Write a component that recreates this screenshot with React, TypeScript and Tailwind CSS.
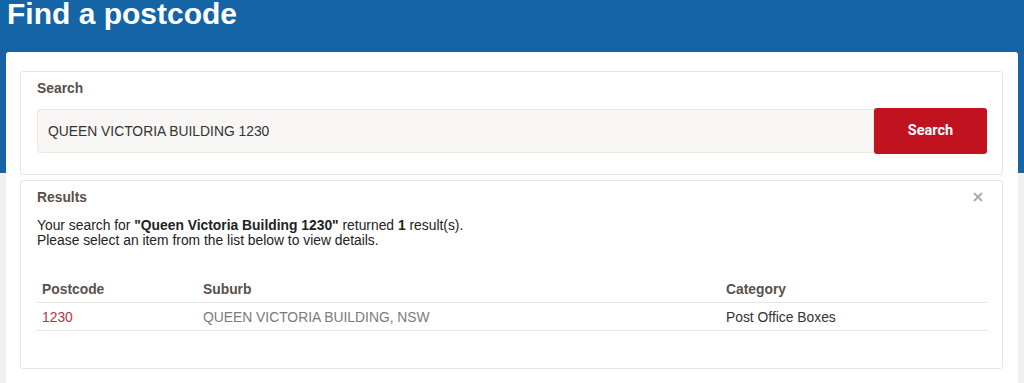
import React from "react";

export default function App() {
  return (
    <div className="flex min-h-[383px] w-full flex-col bg-[linear-gradient(to_bottom,#1464a6_173px,#f2f0ed_173px)] font-['Liberation_Sans',Arial,sans-serif]">
      <div className="h-[52px] px-[7px]">
        <h1 className="text-[30px] font-bold leading-[28px] text-white">Find a postcode</h1>
      </div>
      <div className="mx-[6px] rounded-t-[3px] bg-white pb-[20px] pl-[14px] pr-[15px] pt-[19px]">
        {/* Search panel */}
        <div className="rounded-[3px] border border-[#e6e6e6] pb-[20px] pl-[16px] pr-[15px] pt-[6px]">
          <div className="text-[13.85px] font-bold leading-[21px] text-[#594f49]">Search</div>
          <div className="mt-[9px] flex items-center">
            <div className="flex h-[44px] flex-1 items-center rounded-l-[3px] border border-[#ede6e1] bg-[#f8f6f4] px-[10px] text-[13.85px] text-[#333]">
              QUEEN VICTORIA BUILDING 1230
            </div>
            <button className="h-[46px] w-[113px] rounded-[3px] bg-[#c0121f] font-['Roboto',Arial,sans-serif] text-[14.5px] font-bold text-white">
              Search
            </button>
          </div>
        </div>
        {/* Results panel */}
        <div className="relative mt-[5px] rounded-[3px] border border-[#e6e6e6] pb-[37px] pl-[16px] pr-[15px] pt-[6px]">
          <div className="text-[13.85px] font-bold leading-[21px] text-[#594f49]">Results</div>
          <svg
            className="absolute right-[19px] top-[11px]"
            width="10"
            height="10"
            viewBox="0 0 10 10"
            fill="none"
            stroke="#aaaaaa"
            strokeWidth="1.8"
          >
            <path d="M1 1L9 9M9 1L1 9" />
          </svg>
          <p className="mt-[10px] text-[13.85px] leading-[15px] text-[#222]">
            Your search for <b>"Queen Victoria Building 1230"</b> returned <b>1</b> result(s).
            <br />
            Please select an item from the list below to view details.
          </p>
          <div className="mt-[27px] text-[13.85px]">
            <div className="grid grid-cols-[161px_523px_1fr] border-b border-[#e6e6e6] pb-[3px] pt-[4px] font-bold leading-[20px] text-[#5b504b]">
              <div className="pl-[5px]">Postcode</div>
              <div className="pl-[5px]">Suburb</div>
              <div className="pl-[5px]">Category</div>
            </div>
            <div className="grid grid-cols-[161px_523px_1fr] border-b border-[#e6e6e6] pb-[3px] pt-[4px] leading-[20px]">
              <div className="pl-[5px] text-[#b9323f]">1230</div>
              <div className="pl-[5px] text-[#7b7b7b]">QUEEN VICTORIA BUILDING, NSW</div>
              <div className="pl-[5px] text-[#333]">Post Office Boxes</div>
            </div>
          </div>
        </div>
      </div>
    </div>
  );
}
